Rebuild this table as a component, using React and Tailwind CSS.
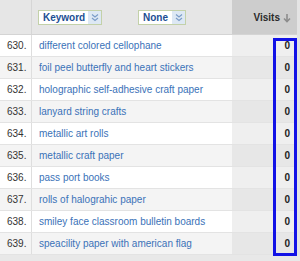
import React from 'react';

const rows = [
  [630, 'different colored cellophane'],
  [631, 'foil peel butterfly and heart stickers'],
  [632, 'holographic self-adhesive craft paper'],
  [633, 'lanyard string crafts'],
  [634, 'metallic art rolls'],
  [635, 'metallic craft paper'],
  [636, 'pass port books'],
  [637, 'rolls of halograhic paper'],
  [638, 'smiley face classroom bulletin boards'],
  [639, 'speacility paper with american flag'],
];

function Chevrons() {
  return (
    <svg width="8" height="9" viewBox="0 0 8 9" fill="none" stroke="#7a9cc8" strokeWidth="1.2">
      <path d="M1 1.5 L4 4 L7 1.5" />
      <path d="M1 5 L4 7.5 L7 5" />
    </svg>
  );
}

function Filter({ label, width }) {
  return (
    <div className={`flex h-[15px] items-stretch border border-[#c3d1a9] bg-white ${width}`}>
      <span className="flex-1 pl-[4px] text-[10px] font-bold leading-[13px] text-[#1d4f94]">{label}</span>
      <span className="flex w-[13px] items-center justify-center bg-[#dde8f4]">
        <Chevrons />
      </span>
    </div>
  );
}

function DownArrow() {
  return (
    <svg width="8" height="10" viewBox="0 0 8 10" fill="none" stroke="#8c8c8c" strokeWidth="1.6">
      <path d="M4 1 V8.5" />
      <path d="M1 5.5 L4 8.5 L7 5.5" />
    </svg>
  );
}

export default function App() {
  return (
    <div className="relative h-[261px] w-[300px] overflow-hidden bg-[#e8e8e8] font-['Liberation_Sans',Arial,sans-serif]">
      <div className="flex">
        <div className="w-[297px]">
          {/* header */}
          <div className="flex h-[35px] border-b border-[#d4d4d4]">
            <div className="w-[32px] border-r border-[#d6d6d6] bg-[#e6e6e6]" />
            <div className="flex w-[200px] items-center gap-[36px] bg-[#e6e6e6] pl-[6px] pt-[1px]">
              <Filter label="Keyword" width="w-[64px]" />
              <Filter label="None" width="w-[48px]" />
            </div>
            <div className="flex flex-1 items-center justify-end gap-[3px] bg-[#cdcdcd] pr-[6px] pt-[1px]">
              <span className="text-[10px] font-bold text-[#2b2b2b]">Visits</span>
              <DownArrow />
            </div>
          </div>

          {/* rows */}
          {rows.map(([n, kw], i) => (
            <div
              key={n}
              className={`flex h-[22px] border-b border-[#e3e3e3] text-[10px] leading-[21px] ${
                i % 2 ? 'bg-[#f4f4f4]' : 'bg-white'
              }`}
            >
              <div className="w-[32px] border-r border-[#dedede] pl-[7px] text-[#333]">{n}.</div>
              <div className="w-[200px] pl-[7px] whitespace-nowrap text-[#3a72b8]">{kw}</div>
              <div
                className={`flex flex-1 justify-end pr-[7px] font-bold text-[#222] ${
                  i % 2 ? 'bg-[#e7e7e7]' : 'bg-[#efefef]'
                }`}
              >
                0
              </div>
            </div>
          ))}
        </div>
        <div className="flex-1 bg-[#e4e4e4]" />
      </div>

      {/* highlight around the visit counts */}
      <div className="absolute left-[273px] top-[38px] h-[218px] w-[24px] border-[3px] border-[#1212e6]" />
    </div>
  );
}
